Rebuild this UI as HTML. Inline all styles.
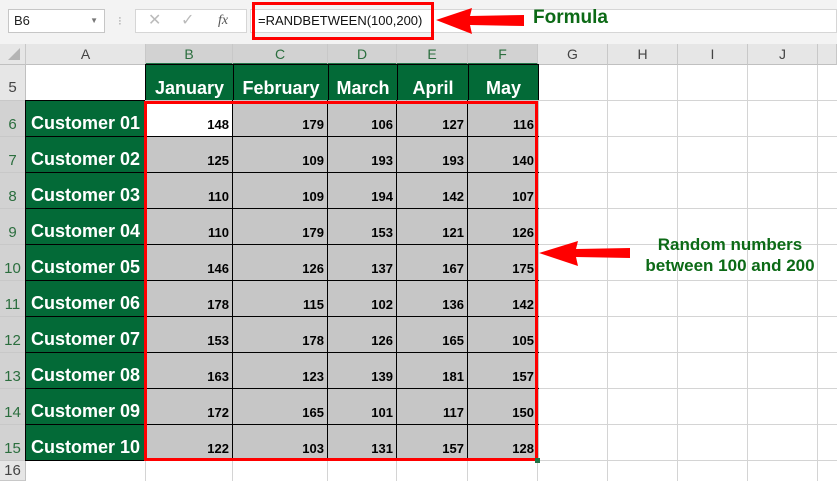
<!DOCTYPE html><html><head><style>
body{margin:0;width:837px;height:481px;overflow:hidden;background:#fff;font-family:"Liberation Sans",sans-serif;position:relative}
div{position:absolute;box-sizing:border-box}
.top{left:0;top:0;width:837px;height:44px;background:#f3f3f3}
.vl{top:44px;width:1px;height:437px;background:#d4d4d4}
.hl{left:26px;width:811px;height:1px;background:#d4d4d4}
.ch{top:44px;height:21px;background:#e6e6e6;border-right:1px solid #c8c8c8;border-bottom:1px solid #c0c0c0;text-align:center;font-size:14px;color:#444;line-height:21px}
.ch.s{background:#d2d2d2;color:#2b6e3e;border-bottom:2px solid #217346}
.rh{left:0;width:26px;background:#e6e6e6;border-bottom:1px solid #c8c8c8;border-right:1px solid #c0c0c0;font-size:15px;color:#444;text-align:center}
.rh.s{background:#d2d2d2;color:#2b6e3e}
.g{background:#036a37;color:#fff;font-weight:bold;font-size:18px;border:1px solid #000}
</style></head><body>
<div class="top"></div>
<div style="left:8px;top:9px;width:97px;height:24px;background:#fff;border:1px solid #c6c6c6;font-size:13px;line-height:22px;padding-left:5px;color:#222">B6<span style="position:absolute;right:6px;top:0;font-size:8px;color:#777">▼</span></div>
<div style="top:14px;width:4px;height:14px;color:#aaa;font-size:12px;left:118px">⁝</div>
<div style="left:135px;top:9px;width:112px;height:24px;background:#fff;border:1px solid #d6d6d6;font-size:16px;color:#bbb;line-height:22px"><span style="position:absolute;left:12px">✕</span><span style="position:absolute;left:45px">✓</span><span style="position:absolute;left:82px;color:#555;font-style:italic;font-family:'Liberation Serif',serif;font-size:14px">fx</span></div>
<div style="left:250px;top:9px;width:587px;height:24px;background:#fff;border:1px solid #d6d6d6"></div>
<div style="left:258px;top:10px;font-size:13px;color:#111;line-height:22px">=RANDBETWEEN(100,200)</div>
<div style="left:252px;top:2px;width:182px;height:38px;border:3px solid #f00"></div>
<svg style="position:absolute;left:436px;top:6px" width="110" height="30"><polygon points="0,14 36,2 34,10 88,9 88,20 34,19 36,28" fill="#f00"/></svg>
<div style="left:533px;top:7px;font-size:19px;font-weight:bold;color:#0c6a16">Formula</div>
<div class="vl" style="left:145px"></div><div class="vl" style="left:232px"></div><div class="vl" style="left:327px"></div><div class="vl" style="left:396px"></div><div class="vl" style="left:467px"></div><div class="vl" style="left:537px"></div><div class="vl" style="left:607px"></div><div class="vl" style="left:677px"></div><div class="vl" style="left:747px"></div><div class="vl" style="left:817px"></div>
<div class="hl" style="top:100px"></div><div class="hl" style="top:136px"></div><div class="hl" style="top:172px"></div><div class="hl" style="top:208px"></div><div class="hl" style="top:244px"></div><div class="hl" style="top:280px"></div><div class="hl" style="top:316px"></div><div class="hl" style="top:352px"></div><div class="hl" style="top:388px"></div><div class="hl" style="top:424px"></div><div class="hl" style="top:460px"></div>
<div class="ch" style="left:0;width:26px"><svg width="20" height="20" style="position:absolute;left:4px;top:0"><polygon points="16,4 16,16 4,16" fill="#b4b4b4"/></svg></div>
<div class="ch" style="left:26px;width:120px">A</div>
<div class="ch s" style="left:146px;width:87px">B</div><div class="ch s" style="left:233px;width:95px">C</div><div class="ch s" style="left:328px;width:69px">D</div><div class="ch s" style="left:397px;width:71px">E</div><div class="ch s" style="left:468px;width:70px">F</div>
<div class="ch" style="left:538px;width:70px">G</div><div class="ch" style="left:608px;width:70px">H</div><div class="ch" style="left:678px;width:70px">I</div><div class="ch" style="left:748px;width:70px">J</div><div class="ch" style="left:818px;width:19px"></div>
<div class="rh" style="top:65px;height:36px;padding-top:14px">5</div>
<div class="rh s" style="top:101px;height:36px;padding-top:15px">6</div><div class="rh s" style="top:137px;height:36px;padding-top:15px">7</div><div class="rh s" style="top:173px;height:36px;padding-top:15px">8</div><div class="rh s" style="top:209px;height:36px;padding-top:15px">9</div><div class="rh s" style="top:245px;height:36px;padding-top:15px">10</div><div class="rh s" style="top:281px;height:36px;padding-top:15px">11</div><div class="rh s" style="top:317px;height:36px;padding-top:15px">12</div><div class="rh s" style="top:353px;height:36px;padding-top:15px">13</div><div class="rh s" style="top:389px;height:36px;padding-top:15px">14</div><div class="rh s" style="top:425px;height:36px;padding-top:15px">15</div>
<div class="rh" style="top:461px;height:20px;padding-top:1px">16</div>
<div class="g" style="left:145px;top:64px;width:89px;height:37px;text-align:center;padding-top:13px">January</div>
<div class="g" style="left:233px;top:64px;width:96px;height:37px;text-align:center;padding-top:13px">February</div>
<div class="g" style="left:328px;top:64px;width:70px;height:37px;text-align:center;padding-top:13px">March</div>
<div class="g" style="left:397px;top:64px;width:72px;height:37px;text-align:center;padding-top:13px">April</div>
<div class="g" style="left:468px;top:64px;width:71px;height:37px;text-align:center;padding-top:13px">May</div>
<div class="g" style="left:25px;top:100px;width:121px;height:37px;padding:12px 0 0 5px">Customer 01</div>
<div class="g" style="left:25px;top:136px;width:121px;height:37px;padding:12px 0 0 5px">Customer 02</div>
<div class="g" style="left:25px;top:172px;width:121px;height:37px;padding:12px 0 0 5px">Customer 03</div>
<div class="g" style="left:25px;top:208px;width:121px;height:37px;padding:12px 0 0 5px">Customer 04</div>
<div class="g" style="left:25px;top:244px;width:121px;height:37px;padding:12px 0 0 5px">Customer 05</div>
<div class="g" style="left:25px;top:280px;width:121px;height:37px;padding:12px 0 0 5px">Customer 06</div>
<div class="g" style="left:25px;top:316px;width:121px;height:37px;padding:12px 0 0 5px">Customer 07</div>
<div class="g" style="left:25px;top:352px;width:121px;height:37px;padding:12px 0 0 5px">Customer 08</div>
<div class="g" style="left:25px;top:388px;width:121px;height:37px;padding:12px 0 0 5px">Customer 09</div>
<div class="g" style="left:25px;top:424px;width:121px;height:37px;padding:12px 0 0 5px">Customer 10</div>
<div style="left:145px;top:100px;width:394px;height:361px;background:#c6c6c6"></div>
<div style="left:146px;top:101px;width:87px;height:35px;background:#fff"></div>
<svg style="position:absolute;left:0;top:0" width="837" height="481"><g stroke="#000" stroke-width="1">
<line x1="232.5" y1="100" x2="232.5" y2="461"/><line x1="327.5" y1="100" x2="327.5" y2="461"/><line x1="396.5" y1="100" x2="396.5" y2="461"/><line x1="467.5" y1="100" x2="467.5" y2="461"/>
<line x1="145" y1="136.5" x2="539" y2="136.5"/><line x1="145" y1="172.5" x2="539" y2="172.5"/><line x1="145" y1="208.5" x2="539" y2="208.5"/><line x1="145" y1="244.5" x2="539" y2="244.5"/><line x1="145" y1="280.5" x2="539" y2="280.5"/><line x1="145" y1="316.5" x2="539" y2="316.5"/><line x1="145" y1="352.5" x2="539" y2="352.5"/><line x1="145" y1="388.5" x2="539" y2="388.5"/><line x1="145" y1="424.5" x2="539" y2="424.5"/></g>
<g font-family="Liberation Sans" font-weight="bold" font-size="13" text-anchor="end" fill="#000">
<text x="229" y="129">148</text><text x="324" y="129">179</text><text x="393" y="129">106</text><text x="464" y="129">127</text><text x="534" y="129">116</text>
<text x="229" y="165">125</text><text x="324" y="165">109</text><text x="393" y="165">193</text><text x="464" y="165">193</text><text x="534" y="165">140</text>
<text x="229" y="201">110</text><text x="324" y="201">109</text><text x="393" y="201">194</text><text x="464" y="201">142</text><text x="534" y="201">107</text>
<text x="229" y="237">110</text><text x="324" y="237">179</text><text x="393" y="237">153</text><text x="464" y="237">121</text><text x="534" y="237">126</text>
<text x="229" y="273">146</text><text x="324" y="273">126</text><text x="393" y="273">137</text><text x="464" y="273">167</text><text x="534" y="273">175</text>
<text x="229" y="309">178</text><text x="324" y="309">115</text><text x="393" y="309">102</text><text x="464" y="309">136</text><text x="534" y="309">142</text>
<text x="229" y="345">153</text><text x="324" y="345">178</text><text x="393" y="345">126</text><text x="464" y="345">165</text><text x="534" y="345">105</text>
<text x="229" y="381">163</text><text x="324" y="381">123</text><text x="393" y="381">139</text><text x="464" y="381">181</text><text x="534" y="381">157</text>
<text x="229" y="417">172</text><text x="324" y="417">165</text><text x="393" y="417">101</text><text x="464" y="417">117</text><text x="534" y="417">150</text>
<text x="229" y="453">122</text><text x="324" y="453">103</text><text x="393" y="453">131</text><text x="464" y="453">157</text><text x="534" y="453">128</text></g>
<rect x="145.5" y="102.5" width="391" height="357" fill="none" stroke="#f00" stroke-width="3"/>
<rect x="535" y="458" width="5" height="5" fill="#217346"/>
<polygon points="539,253 578,241 576,249 630,248 630,258 576,257 578,266" fill="#f00"/>
</svg>
<div style="left:620px;top:234px;width:220px;text-align:center;font-size:17px;font-weight:bold;color:#0c6a16;line-height:21px">Random numbers<br>between 100 and 200</div>
</body></html>
